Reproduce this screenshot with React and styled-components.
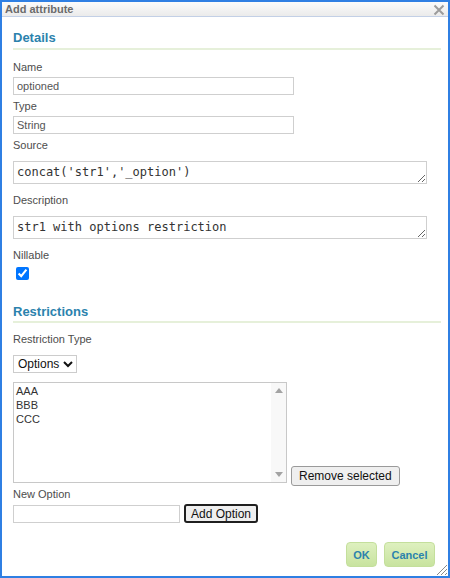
import React from "react";
import styled, { createGlobalStyle } from "styled-components";

const GlobalStyle = createGlobalStyle`
  html, body {
    margin: 0;
    padding: 0;
    background: #ffffff;
  }
  body {
    font-family: "Liberation Sans", Arial, sans-serif;
  }
`;

const Dialog = styled.div`
  position: relative;
  width: 450px;
  height: 578px;
  box-sizing: border-box;
  border: 2px solid #2f7fe3;
  display: flex;
  flex-direction: column;
  background: #ffffff;
`;

const TitleBar = styled.div`
  height: 14px;
  display: flex;
  align-items: center;
  justify-content: space-between;
  padding: 0 3px 0 3px;
  background: linear-gradient(#fbfbfb, #ebebeb);
  border-bottom: 1px solid #c3d0e6;
`;

const Title = styled.div`
  font-size: 11px;
  font-weight: bold;
  color: #6b6b6b;
  line-height: 14px;
`;

const CloseIcon = styled.svg`
  width: 12px;
  height: 12px;
  margin-top: 1px;
`;

const Content = styled.div`
  flex: 1;
  display: flex;
  flex-direction: column;
  padding: 0 7px 9px 11px;
`;

const SectionTitle = styled.div`
  margin-top: ${(p) => p.$top}px;
  font-size: 13px;
  font-weight: bold;
  line-height: 15px;
  color: #2b82ad;
  padding-bottom: ${(p) => p.$pad}px;
  border-bottom: 2px solid #e6f0da;
`;

const Label = styled.div`
  margin-top: ${(p) => p.$top || 0}px;
  font-size: 11px;
  line-height: 14px;
  color: #4d4d4d;
`;

const TextInput = styled.input`
  display: block;
  box-sizing: border-box;
  width: ${(p) => p.$width}px;
  height: 18px;
  margin: ${(p) => (p.$inline ? "0" : "3px 0 4px 0")};
  padding: 0 3px;
  border: 1px solid #cfcfcf;
  font-family: "Liberation Sans", Arial, sans-serif;
  font-size: 11px;
  color: #555555;
  outline: none;
`;

const CodeArea = styled.textarea`
  display: block;
  box-sizing: border-box;
  width: 414px;
  height: 23px;
  margin-top: 9px;
  padding: 2px 3px;
  border: 1px solid #cfcfcf;
  font-family: "DejaVu Sans Mono", monospace;
  font-size: 12px;
  line-height: 16px;
  color: #333333;
  overflow: hidden;
  resize: both;
  outline: none;
`;

const Check = styled.input`
  margin: 5px 0 0 3px;
  width: 13px;
  height: 13px;
`;

const Select = styled.select`
  align-self: flex-start;
  margin-top: 9px;
  height: 18px;
  padding: 0;
  border: 1px solid #cccccc;
  border-radius: 0;
  background: #ffffff;
  font-family: "Liberation Sans", Arial, sans-serif;
  font-size: 12px;
  color: #111111;
`;

const ListRow = styled.div`
  display: flex;
  align-items: flex-end;
  gap: 4px;
  margin-top: 9px;
`;

const ListBox = styled.div`
  width: 274px;
  height: 101px;
  box-sizing: border-box;
  border: 1px solid #c8c8c8;
  display: flex;
`;

const ListItems = styled.div`
  flex: 1;
  padding: 1px 2px;
`;

const ListItem = styled.div`
  font-size: 11px;
  line-height: 14px;
  color: #333333;
`;

const ScrollTrack = styled.div`
  width: 15px;
  background: #f8f8f8;
  display: flex;
  flex-direction: column;
  justify-content: space-between;
  align-items: center;
  padding: 5px 0;
`;

const Arrow = styled.svg`
  width: 8px;
  height: 5px;
`;

const PlainButton = styled.button`
  box-sizing: border-box;
  height: ${(p) => p.$height}px;
  margin-bottom: ${(p) => p.$drop || 0}px;
  padding: 0 ${(p) => p.$padX}px;
  border: ${(p) => (p.$focus ? "2px solid #1f1f1f" : "1px solid #9a9a9a")};
  border-radius: 3px;
  background: #efefef;
  font-family: "Liberation Sans", Arial, sans-serif;
  font-size: 12px;
  color: #111111;
`;

const InputRow = styled.div`
  display: flex;
  align-items: center;
  gap: 4px;
  margin-top: 3px;
`;

const Footer = styled.div`
  margin-top: auto;
  display: flex;
  justify-content: flex-end;
  gap: 7px;
  padding-right: 6px;
`;

const ActionButton = styled.button`
  height: 25px;
  width: ${(p) => p.$width}px;
  padding: 0;
  border: 1px solid #c4df9c;
  border-radius: 4px;
  background: linear-gradient(#def0bf, #c8e39f);
  font-family: "Liberation Sans", Arial, sans-serif;
  font-size: 11px;
  font-weight: bold;
  color: #2b82ad;
`;

const Grip = styled.svg`
  position: absolute;
  right: 0;
  bottom: 0;
  width: 14px;
  height: 14px;
`;

export default function App() {
  return (
    <>
      <GlobalStyle />
      <Dialog>
        <TitleBar>
          <Title>Add attribute</Title>
          <CloseIcon viewBox="0 0 12 12">
            <path d="M1.5 1.5 L10.5 10.5 M10.5 1.5 L1.5 10.5" stroke="#9c9c9c" strokeWidth="2" />
          </CloseIcon>
        </TitleBar>
        <Content>
          <SectionTitle $top={13} $pad={3}>Details</SectionTitle>
          <Label $top={10}>Name</Label>
          <TextInput $width={281} defaultValue="optioned" />
          <Label>Type</Label>
          <TextInput $width={281} defaultValue="String" />
          <Label>Source</Label>
          <CodeArea defaultValue="concat('str1','_option')" />
          <Label $top={9}>Description</Label>
          <CodeArea defaultValue="str1 with options restriction" />
          <Label $top={9}>Nillable</Label>
          <Check type="checkbox" defaultChecked />
          <SectionTitle $top={24} $pad={2}>Restrictions</SectionTitle>
          <Label $top={9}>Restriction Type</Label>
          <Select defaultValue="Options">
            <option>Options</option>
          </Select>
          <ListRow>
            <ListBox>
              <ListItems>
                <ListItem>AAA</ListItem>
                <ListItem>BBB</ListItem>
                <ListItem>CCC</ListItem>
              </ListItems>
              <ScrollTrack>
                <Arrow viewBox="0 0 8 5">
                  <path d="M0 5 L4 0 L8 5 Z" fill="#a3a3a3" />
                </Arrow>
                <Arrow viewBox="0 0 8 5">
                  <path d="M0 0 L4 5 L8 0 Z" fill="#a3a3a3" />
                </Arrow>
              </ScrollTrack>
            </ListBox>
            <PlainButton $height={20} $drop={-3} $padX={7}>Remove selected</PlainButton>
          </ListRow>
          <Label $top={4}>New Option</Label>
          <InputRow>
            <TextInput $width={167} $inline />
            <PlainButton $height={19} $padX={5} $focus>Add Option</PlainButton>
          </InputRow>
          <Footer>
            <ActionButton $width={31}>OK</ActionButton>
            <ActionButton $width={51}>Cancel</ActionButton>
          </Footer>
        </Content>
        <Grip viewBox="0 0 14 14">
          <path d="M3 13 L13 3 M7 13 L13 7 M11 13 L13 11" stroke="#8a8a8a" strokeWidth="1" />
        </Grip>
      </Dialog>
    </>
  );
}
